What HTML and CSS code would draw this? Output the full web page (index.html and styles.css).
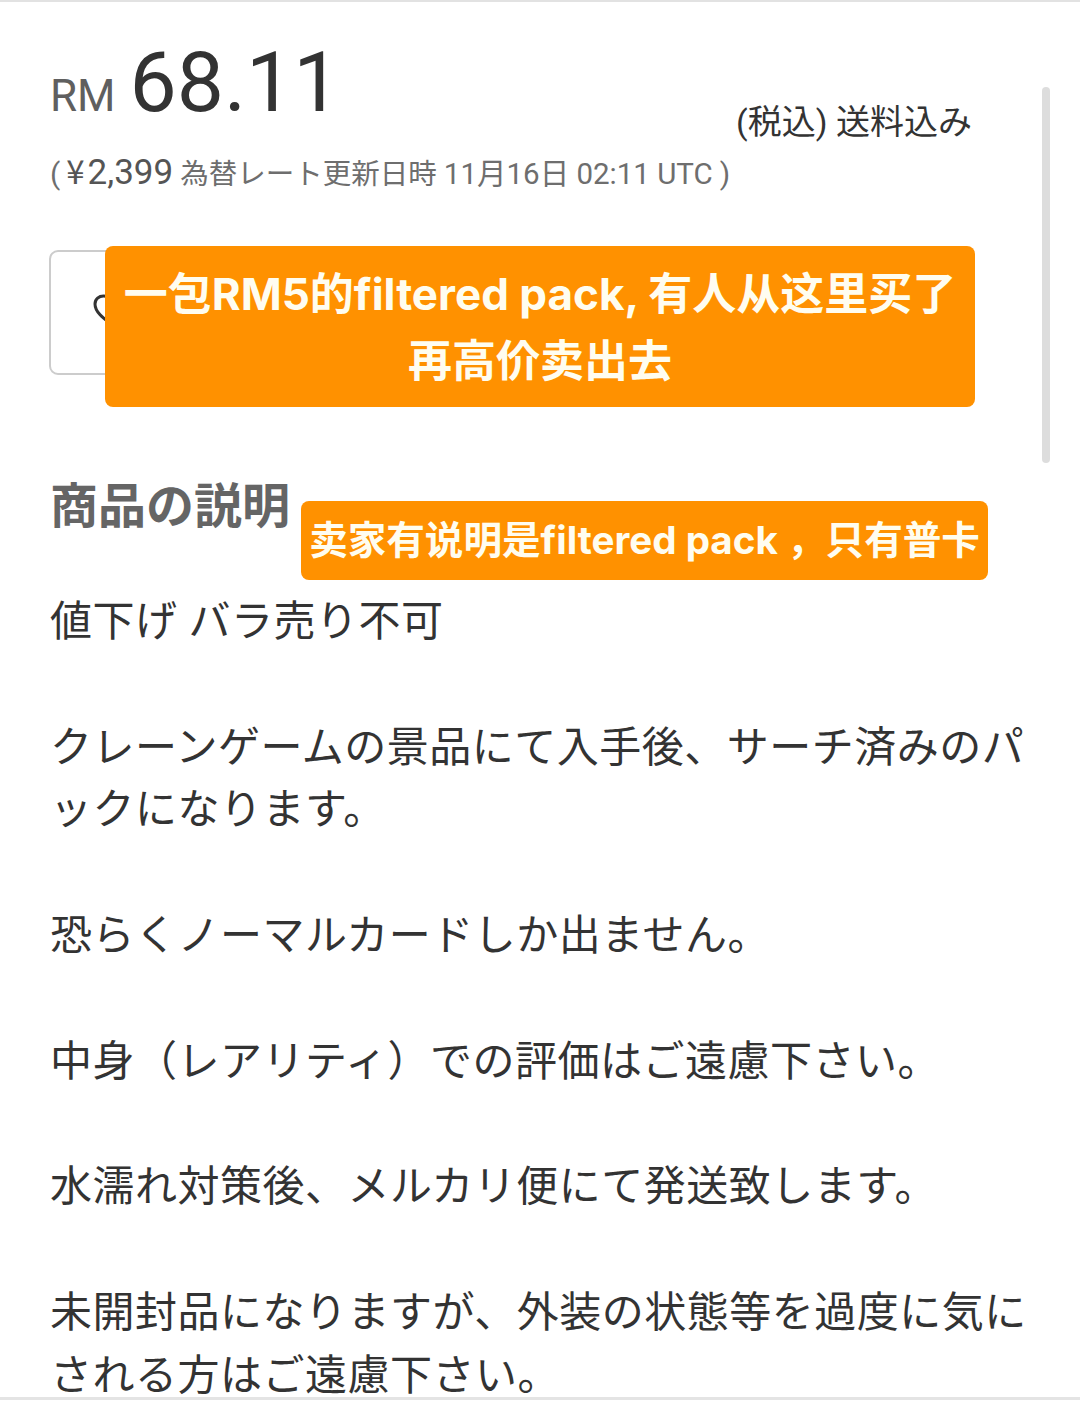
FILE: index.html
```html
<!DOCTYPE html>
<html lang="ja">
<head>
<meta charset="utf-8">
<title>商品の説明</title>
<link rel="stylesheet" href="styles.css">
</head>
<body>
<div class="page">
  <div class="price-row">
    <div class="price">
      <span class="currency">RM</span>
      <span class="amount">68.11</span>
    </div>
    <div class="tax">(税込) 送料込み</div>
  </div>
  <div class="rate">
    <span class="paren">(</span><span class="yen"><span class="yen-mark">¥</span>2,399</span> 為替レート更新日時 <span class="time">11月16日 02:11 UTC</span> <span class="paren">)</span>
  </div>

  <div class="action-row">
    <div class="like-btn">
      <svg class="heart" width="38" height="34" viewBox="0 0 38 34" aria-hidden="true">
        <path d="M19 31 C 10 24, 2 18, 2 10 C 2 5, 6 2, 10.5 2 C 14 2, 17 4, 19 7 C 21 4, 24 2, 27.5 2 C 32 2, 36 5, 36 10 C 36 18, 28 24, 19 31 Z" fill="none" stroke="#333" stroke-width="3" stroke-linejoin="round"/>
      </svg>
    </div>
  </div>

  <h2 class="section-title">商品の説明</h2>
  <div class="desc">
    <p>値下げ バラ売り不可</p>
    <p>クレーンゲームの景品にて入手後、サーチ済みのパックになります。</p>
    <p>恐らくノーマルカードしか出ません。</p>
    <p>中身（レアリティ）での評価はご遠慮下さい。</p>
    <p>水濡れ対策後、メルカリ便にて発送致します。</p>
    <p>未開封品になりますが、外装の状態等を過度に気にされる方はご遠慮下さい。</p>
  </div>

  <div class="note note-one">一包RM5的filtered pack, 有人从这里买了<br>再高价卖出去</div>
  <div class="note note-two">卖家有说明是filtered pack ，只有普卡</div>
  <div class="scrollbar"></div>
</div>
<div class="bottom-bar"></div>
</body>
</html>
```

FILE: styles.css
```css
html, body {
  margin: 0;
  padding: 0;
  background: #ffffff;
}

body {
  font-family: Roboto, "Noto Sans CJK JP", sans-serif;
  color: #333333;
}

.page {
  position: relative;
  height: 1395px;
  overflow: hidden;
  border-top: 2px solid #e2e2e2;
}

.price-row {
  display: flex;
  align-items: flex-start;
  justify-content: space-between;
  padding: 37px 108px 0 50px;
}

.price {
  display: flex;
  align-items: baseline;
  gap: 14px;
  line-height: 88px;
}

.currency {
  font-size: 44px;
  color: #5f5f5f;
}

.amount {
  font-size: 84px;
  color: #333333;
}

.tax {
  margin-top: 63px;
  font-size: 34px;
  line-height: 40px;
  color: #333333;
}

.rate {
  padding-left: 50px;
  margin-top: 8px;
  font-size: 28.5px;
  line-height: 40px;
  color: #6e6e6e;
}

.rate .yen {
  font-size: 35px;
  color: #555555;
  margin-left: 6px;
}

.rate .yen-mark {
  font-family: "Noto Sans CJK JP", sans-serif;
  font-size: 33px;
  margin-right: 3px;
}

.rate .time {
  font-size: 29.5px;
}

.rate .paren {
  font-size: 30px;
}

.action-row {
  display: flex;
  padding-left: 49px;
  margin-top: 55px;
}

.like-btn {
  box-sizing: border-box;
  width: 210px;
  height: 125px;
  border: 2px solid #cccccc;
  border-radius: 9px;
  display: flex;
  align-items: center;
  padding-left: 42px;
}

.heart {
  display: block;
  margin-top: -4px;
}

.section-title {
  margin: 102px 0 0 50px;
  font-size: 48px;
  line-height: 60px;
  font-weight: 700;
  color: #656565;
}

.desc {
  margin-top: 54px;
  padding-left: 50px;
  width: 995px;
  font-size: 42px;
  letter-spacing: 0.5px;
  line-height: 62.8px;
  color: #333333;
}

.desc p {
  margin: 0 0 62.8px 0;
}

.note {
  position: absolute;
  box-sizing: border-box;
  background: #ff9100;
  color: #fffdf0;
  font-family: Inter, "Noto Sans CJK SC", sans-serif;
  font-weight: 700;
  border-radius: 8px;
  text-align: center;
  white-space: nowrap;
}

.note-one {
  left: 105px;
  top: 244px;
  width: 870px;
  height: 161px;
  padding-top: 15px;
  font-size: 44px;
  line-height: 67px;
}

.note-two {
  left: 301px;
  top: 499px;
  width: 687px;
  height: 79px;
  font-size: 38.6px;
  line-height: 79px;
}

.scrollbar {
  position: absolute;
  left: 1042px;
  top: 85px;
  width: 8px;
  height: 376px;
  border-radius: 4px;
  background: #dddddd;
}

.bottom-bar {
  height: 3px;
  background: #e4e4e4;
}
```
